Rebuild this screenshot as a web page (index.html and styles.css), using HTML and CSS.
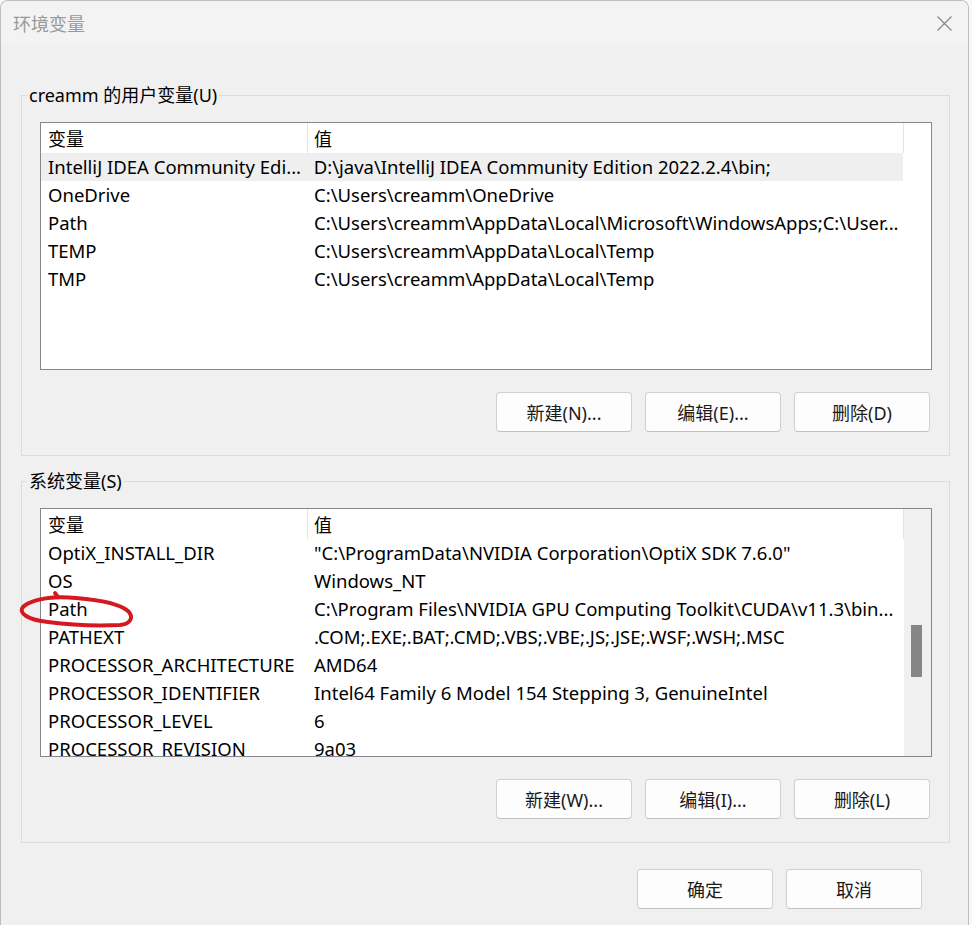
FILE: index.html
```html
<!DOCTYPE html>
<html lang="zh-CN">
<head>
    <meta charset="UTF-8">
    <title>环境变量</title>
    <link rel="stylesheet" href="styles.css">
</head>
<body>
<div class="window">
    <div class="titlebar">
        <span class="title">环境变量</span>
        <svg class="close" width="15" height="15" viewBox="0 0 15 15">
            <path d="M0.5 0.5 L14.5 14.5 M14.5 0.5 L0.5 14.5" stroke="#8a8a8a" stroke-width="1.3" fill="none"/>
        </svg>
    </div>
    <div class="content">
        <!--用户变量-->
        <fieldset class="group">
            <legend>creamm 的用户变量(U)</legend>
            <div class="group-body">
                <div class="list">
                    <div class="table">
                        <div class="row head"><div class="c1">变量</div><div class="c2">值</div></div>
                        <div class="row selected"><div class="c1">IntelliJ IDEA Community Edi...</div><div class="c2">D:\java\IntelliJ IDEA Community Edition 2022.2.4\bin;</div></div>
                        <div class="row"><div class="c1">OneDrive</div><div class="c2">C:\Users\creamm\OneDrive</div></div>
                        <div class="row"><div class="c1">Path</div><div class="c2">C:\Users\creamm\AppData\Local\Microsoft\WindowsApps;C:\User...</div></div>
                        <div class="row"><div class="c1">TEMP</div><div class="c2">C:\Users\creamm\AppData\Local\Temp</div></div>
                        <div class="row"><div class="c1">TMP</div><div class="c2">C:\Users\creamm\AppData\Local\Temp</div></div>
                    </div>
                    <div class="side"></div>
                </div>
                <div class="buttons">
                    <button>新建(N)...</button>
                    <button>编辑(E)...</button>
                    <button>删除(D)</button>
                </div>
            </div>
        </fieldset>
        <!--系统变量-->
        <fieldset class="group second">
            <legend>系统变量(S)</legend>
            <div class="group-body">
                <div class="list tall">
                    <div class="table">
                        <div class="row head"><div class="c1">变量</div><div class="c2">值</div></div>
                        <div class="row"><div class="c1">OptiX_INSTALL_DIR</div><div class="c2">"C:\ProgramData\NVIDIA Corporation\OptiX SDK 7.6.0"</div></div>
                        <div class="row"><div class="c1">OS</div><div class="c2">Windows_NT</div></div>
                        <div class="row"><div class="c1">Path</div><div class="c2">C:\Program Files\NVIDIA GPU Computing Toolkit\CUDA\v11.3\bin...</div></div>
                        <div class="row"><div class="c1">PATHEXT</div><div class="c2">.COM;.EXE;.BAT;.CMD;.VBS;.VBE;.JS;.JSE;.WSF;.WSH;.MSC</div></div>
                        <div class="row"><div class="c1">PROCESSOR_ARCHITECTURE</div><div class="c2">AMD64</div></div>
                        <div class="row"><div class="c1">PROCESSOR_IDENTIFIER</div><div class="c2">Intel64 Family 6 Model 154 Stepping 3, GenuineIntel</div></div>
                        <div class="row"><div class="c1">PROCESSOR_LEVEL</div><div class="c2">6</div></div>
                        <div class="row"><div class="c1">PROCESSOR_REVISION</div><div class="c2">9a03</div></div>
                    </div>
                    <div class="side scroll"><div class="thumb"></div></div>
                </div>
                <div class="buttons">
                    <button>新建(W)...</button>
                    <button>编辑(I)...</button>
                    <button>删除(L)</button>
                </div>
            </div>
        </fieldset>
        <div class="footer">
            <button>确定</button>
            <button>取消</button>
        </div>
    </div>
    <!--红色圈注-->
    <svg class="mark" width="118" height="42" viewBox="18 588 118 42">
        <path d="M58 597 C45 598 29 601 23 607 C18 613 28 620 48 622 C70 625 98 626 120 625 C131 624 134 617 128 611 C120 604 100 600 76 598 C66 597 56 597 48 598 M55 593 L58 597" stroke="#d41a20" stroke-width="3.9" stroke-linecap="round" fill="none"/>
    </svg>
</div>
</body>
</html>
```

FILE: styles.css
```css
body{
    margin: 0;
    background: #f8f8f8;
    font-family: "Noto Sans", "Noto Sans CJK SC", sans-serif;
    font-size: 18px;
    color: #000;
}
.window{
    position: relative;
    width: 969px;
    height: 940px;
    box-sizing: border-box;
    border: 1px solid #bdbdbd;
    border-bottom: none;
    border-radius: 8px 8px 0 0;
    background: #f0f0f0;
    overflow: hidden;
}
.titlebar{
    display: flex;
    align-items: center;
    height: 44px;
    padding-left: 12px;
    background: #f3f3f3;
}
.title{
    color: #999;
    font-size: 18px;
}
.close{
    margin-left: auto;
    margin-right: 16px;
}
.content{
    padding: 0 18px 0 20px;
}
/*分组框*/
.group{
    margin: 38px 0 0;
    padding: 0 5px;
    border: 1px solid #dcdcdc;
    min-width: 0;
}
.group legend{
    padding: 0 2px;
    line-height: 24px;
}
.second{
    margin-top: 13px;
}
.group-body{
    padding: 15px 12px 23px 13px;
}
/*列表*/
.list{
    display: flex;
    height: 248px;
    box-sizing: border-box;
    border: 1px solid #828790;
    background: #fff;
    overflow: hidden;
}
.list.tall{
    height: 249px;
}
.table{
    width: 863px;
}
.row{
    display: flex;
    height: 28px;
    box-sizing: border-box;
    padding-bottom: 1px;
    align-items: center;
    white-space: nowrap;
    font-size: 18.5px;
}
.row.head{
    height: 30px;
    padding-bottom: 0;
    align-items: stretch;
    font-size: 18px;
}
.row.head div{
    display: flex;
    align-items: center;
    border-right-color: #e5e5e5;
}
.row.selected{
    background: #efefef;
    margin-right: 1px;
}
.c1,.c2{
    box-sizing: border-box;
    overflow: hidden;
    border-right: 1px solid transparent;
}
.c1{
    width: 267px;
    padding-left: 7px;
}
.c2{
    width: 596px;
    padding-left: 6px;
}
.side{
    flex: 1;
}
.scroll{
    background: #f0f0f0;
    padding: 116px 0 0 7px;
}
.thumb{
    width: 11px;
    height: 52px;
    background: #868686;
}
/*按钮*/
.buttons,.footer{
    display: flex;
    justify-content: flex-end;
    gap: 13px;
}
.buttons{
    margin-top: 22px;
    padding-right: 2px;
}
.footer{
    margin-top: 26px;
    padding-right: 28px;
}
button{
    width: 136px;
    height: 40px;
    border: 1px solid #d0d0d0;
    border-bottom-color: #c2c2c2;
    border-radius: 4px;
    background: #fdfdfd;
    font-family: inherit;
    font-size: 18px;
    color: #1a1a1a;
    padding: 0;
}
.mark{
    position: absolute;
    left: 17px;
    top: 587px;
}
```
